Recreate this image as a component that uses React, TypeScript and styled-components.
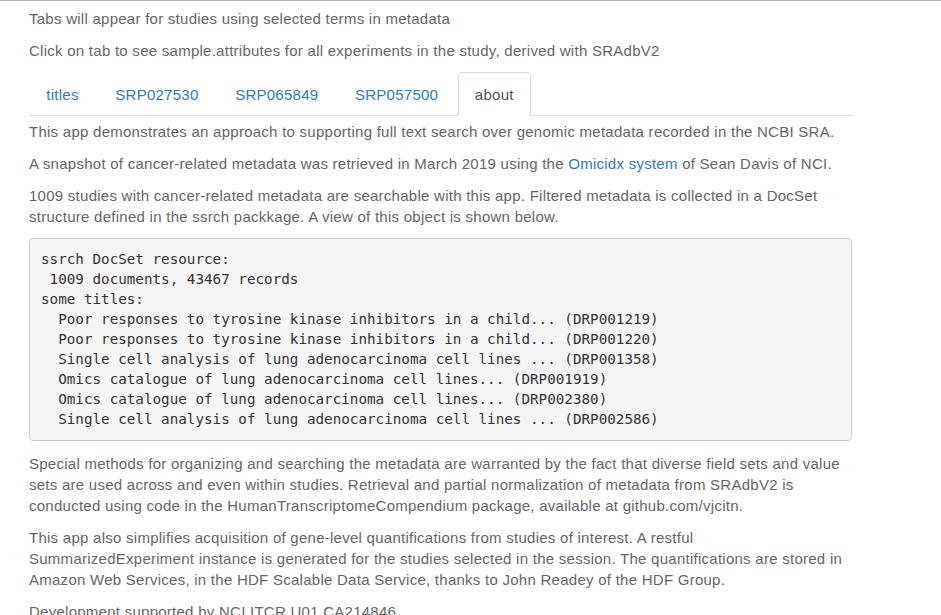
import React from "react";
import styled, { createGlobalStyle } from "styled-components";

const Global = createGlobalStyle`
  html, body { margin: 0; padding: 0; background: #fff; }
  body {
    font-family: "Liberation Sans", Arial, Helvetica, sans-serif;
    font-size: 15px;
    letter-spacing: 0.26px;
    color: #666;
  }
`;

const Page = styled.div`
  border-top: 1px solid #b4b4b4;
  padding: 7px 0 0 29px;
`;

const Container = styled.div`
  width: 823px;
`;

const P = styled.p`
  margin: 0 0 11px;
  line-height: 21px;
  white-space: nowrap;
`;

const Link = styled.a`
  color: #337ab7;
  text-decoration: none;
`;

const TabBar = styled.ul`
  display: flex;
  list-style: none;
  margin: 0;
  padding: 0;
  border-bottom: 1px solid #ddd;
`;

const TabItem = styled.li`
  margin: 0 2px -1px 0;
`;

const TabLink = styled.a<{ $active?: boolean }>`
  display: block;
  padding: 10.5px 16.3px 10px;
  line-height: 21px;
  border: 1px solid ${(p) => (p.$active ? "#ddd" : "transparent")};
  border-bottom-color: transparent;
  border-radius: 4px 4px 0 0;
  background: ${(p) => (p.$active ? "#fff" : "transparent")};
  color: ${(p) => (p.$active ? "#555" : "#337ab7")};
  text-decoration: none;
  cursor: pointer;
`;

const TabContent = styled.div`
  padding-top: 5px;
`;

const Pre = styled.pre`
  margin: 0 0 12px;
  padding: 10.5px 11px;
  background: #f5f5f5;
  border: 1px solid #ccc;
  border-radius: 4px;
  font-family: "DejaVu Sans Mono", "Liberation Mono", monospace;
  font-size: 14.25px;
  letter-spacing: 0;
  line-height: 20px;
  color: #333;
  white-space: pre;
  overflow: hidden;
`;

const tabs = ["titles", "SRP027530", "SRP065849", "SRP057500", "about"];

const docset = `ssrch DocSet resource:
 1009 documents, 43467 records
some titles:
  Poor responses to tyrosine kinase inhibitors in a child... (DRP001219)
  Poor responses to tyrosine kinase inhibitors in a child... (DRP001220)
  Single cell analysis of lung adenocarcinoma cell lines ... (DRP001358)
  Omics catalogue of lung adenocarcinoma cell lines... (DRP001919)
  Omics catalogue of lung adenocarcinoma cell lines... (DRP002380)
  Single cell analysis of lung adenocarcinoma cell lines ... (DRP002586)`;

export default function App() {
  return (
    <Page>
      <Global />
      <Container>
        <P>Tabs will appear for studies using selected terms in metadata</P>
        <P>Click on tab to see sample.attributes for all experiments in the study, derived with SRAdbV2</P>
        <TabBar>
          {tabs.map((t) => (
            <TabItem key={t}>
              <TabLink $active={t === "about"}>{t}</TabLink>
            </TabItem>
          ))}
        </TabBar>
        <TabContent>
          <P>
            This app demonstrates an approach to supporting full text search over genomic metadata recorded in the NCBI SRA.
          </P>
          <P>
            A snapshot of cancer-related metadata was retrieved in March 2019 using the{" "}
            <Link href="#">Omicidx system</Link> of Sean Davis of NCI.
          </P>
          <P>
            1009 studies with cancer-related metadata are searchable with this app. Filtered metadata is collected in a DocSet
            <br />
            structure defined in the ssrch packkage. A view of this object is shown below.
          </P>
          <Pre>{docset}</Pre>
          <P>
            Special methods for organizing and searching the metadata are warranted by the fact that diverse field sets and value
            <br />
            sets are used across and even within studies. Retrieval and partial normalization of metadata from SRAdbV2 is
            <br />
            conducted using code in the HumanTranscriptomeCompendium package, available at github.com/vjcitn.
          </P>
          <P>
            This app also simplifies acquisition of gene-level quantifications from studies of interest. A restful
            <br />
            SummarizedExperiment instance is generated for the studies selected in the session. The quantifications are stored in
            <br />
            Amazon Web Services, in the HDF Scalable Data Service, thanks to John Readey of the HDF Group.
          </P>
          <P>Development supported by NCI ITCR U01 CA214846</P>
        </TabContent>
      </Container>
    </Page>
  );
}
